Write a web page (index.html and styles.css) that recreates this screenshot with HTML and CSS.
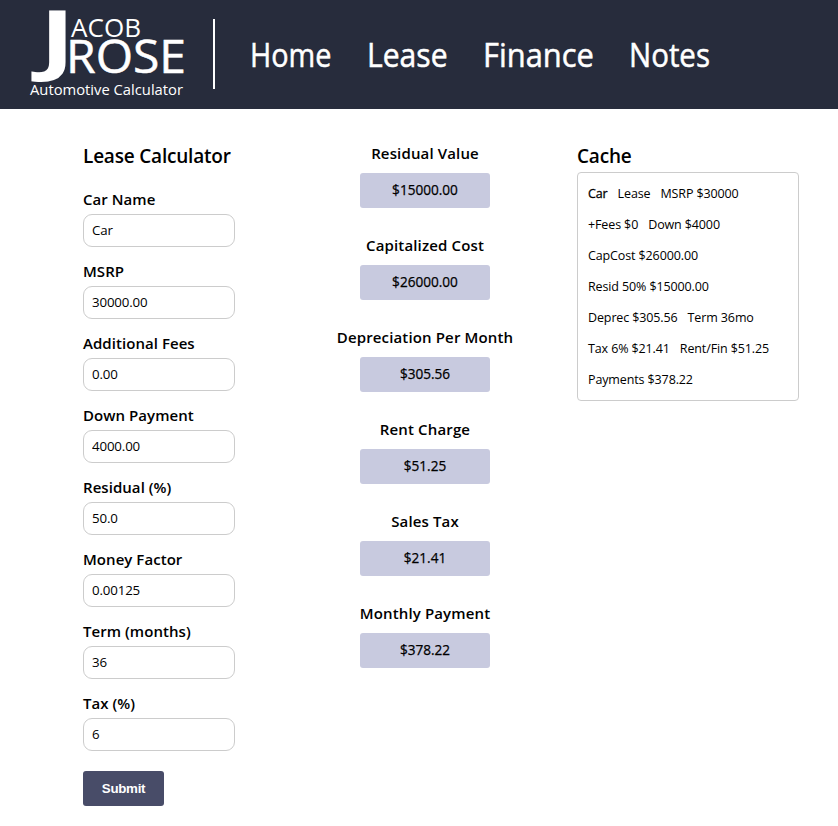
FILE: index.html
```html
<!DOCTYPE html>
<html lang="en">
<head>
<meta charset="utf-8">
<title>Jacob Rose Automotive Calculator</title>
<link rel="stylesheet" href="styles.css">
</head>
<body>
<header class="header">
  <svg class="logo" width="213" height="109" viewBox="0 0 213 109" role="img" aria-label="Jacob Rose Automotive Calculator">
    <text class="logo-j" transform="translate(39.5 65.5) scale(1.4 1)" x="0" y="0">J</text>
    <text class="logo-word" x="71" y="37" font-size="26" textLength="70" lengthAdjust="spacingAndGlyphs">ACOB</text>
    <text class="logo-word logo-rose" x="66" y="73" font-size="45" textLength="120" lengthAdjust="spacingAndGlyphs">ROSE</text>
    <text class="logo-word" x="30" y="95" font-size="14.5" textLength="153" lengthAdjust="spacingAndGlyphs">Automotive Calculator</text>
  </svg>
  <nav class="nav">
    <a class="home">Home</a><a class="lease">Lease</a><a class="finance">Finance</a><a class="notes">Notes</a>
  </nav>
</header>
<main class="main">
  <form class="form">
    <h2>Lease Calculator</h2>
    <label>Car Name<input value="Car"></label>
    <label>MSRP<input value="30000.00"></label>
    <label>Additional Fees<input value="0.00"></label>
    <label>Down Payment<input value="4000.00"></label>
    <label>Residual (%)<input value="50.0"></label>
    <label>Money Factor<input value="0.00125"></label>
    <label>Term (months)<input value="36"></label>
    <label>Tax (%)<input value="6"></label>
    <button type="button">Submit</button>
  </form>
  <section class="results">
    <div class="result"><h3>Residual Value</h3><output>$15000.00</output></div>
    <div class="result"><h3>Capitalized Cost</h3><output>$26000.00</output></div>
    <div class="result"><h3>Depreciation Per Month</h3><output>$305.56</output></div>
    <div class="result"><h3>Rent Charge</h3><output>$51.25</output></div>
    <div class="result"><h3>Sales Tax</h3><output>$21.41</output></div>
    <div class="result"><h3>Monthly Payment</h3><output>$378.22</output></div>
  </section>
  <section class="cache">
    <h2>Cache</h2>
    <div class="entry">
      <p><b>Car</b><span>Lease</span><span>MSRP $30000</span></p>
      <p><span>+Fees $0</span><span>Down $4000</span></p>
      <p><span>CapCost $26000.00</span></p>
      <p><span>Resid 50% $15000.00</span></p>
      <p><span>Deprec $305.56</span><span>Term 36mo</span></p>
      <p><span>Tax 6% $21.41</span><span>Rent/Fin $51.25</span></p>
      <p><span>Payments $378.22</span></p>
    </div>
  </section>
</main>
</body>
</html>
```
FILE: styles.css
```css
* { box-sizing: border-box; }
body { margin: 0; background: #fff; color: #000; font-family: "Trebuchet MS", "Open Sans", sans-serif; }
h2, h3, p { margin: 0; }
.header { display: flex; height: 109px; background: #272c3c; color: #fff; }
.logo { flex: none; fill: #fff; font-family: "Open Sans", sans-serif; }
.logo-j { font-size: 77px; font-weight: 700; }
.logo-rose { stroke: #fff; stroke-width: .5px; }
.nav { display: grid; grid-template-columns: 117px 116px 146px 90px; align-items: center; height: 70px; margin-top: 19px; padding-left: 35px; border-left: 2px solid #fff; font-size: 32px; white-space: nowrap; -webkit-text-stroke: .5px #fff; }
.nav a { justify-self: start; padding-top: 2px; line-height: 44px; transform-origin: 0 50%; }
.home { transform: scaleX(.9); }
.lease { transform: scaleX(.94); }
.finance { transform: scaleX(.965); }
.notes { transform: scaleX(.92); }
.main { display: flex; padding: 35px 0 0 83px; }
.form { width: 152px; }
h2 { height: 24px; font-size: 19px; line-height: 24px; font-weight: 600; letter-spacing: -.2px; white-space: nowrap; }
.form h2 { margin-bottom: 20px; }
label { display: block; height: 72px; font-size: 15px; line-height: 22px; font-weight: 600; letter-spacing: .05px; white-space: nowrap; }
input { display: block; width: 152px; height: 33px; margin-top: 4px; padding: 0 8px 2px; border: 1px solid #ccc; border-radius: 9px; background: #fff; color: #000; font-family: inherit; font-size: 13.3px; letter-spacing: -.15px; }
button { display: block; width: 81px; height: 35px; margin-top: 7px; padding: 0; border: 0; border-radius: 3px; background: #484c68; color: #fff; font: bold 13.33px "Liberation Sans", sans-serif; letter-spacing: -.3px; }
.results { width: 200px; margin-left: 90px; text-align: center; }
.result { height: 92px; }
h3 { height: 29px; font-size: 15px; line-height: 18px; font-weight: 600; letter-spacing: .14px; white-space: nowrap; }
output { display: block; width: 130px; height: 35px; margin: 0 auto; border-radius: 3px; background: #c8cadf; font-size: 13.6px; line-height: 33px; -webkit-text-stroke: .25px #000; }
.cache { width: 222px; margin-left: 52px; }
.entry { height: 229px; margin-top: 4px; padding: 5px 10px; border: 1px solid #ccc; border-radius: 4px; font-size: 12.5px; letter-spacing: -.12px; }
.entry p { display: flex; gap: 10px; height: 31px; line-height: 31px; white-space: nowrap; }
.entry b { font-weight: 400; -webkit-text-stroke: .3px #000; }
```
